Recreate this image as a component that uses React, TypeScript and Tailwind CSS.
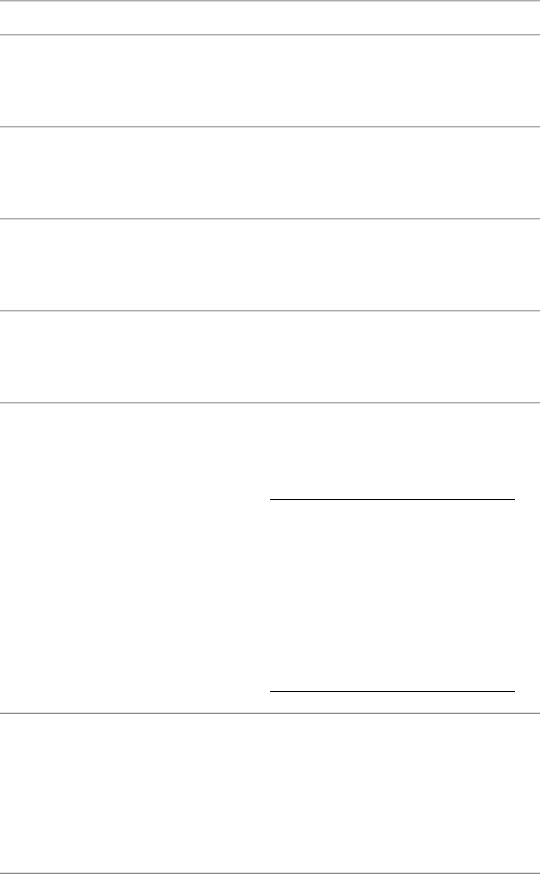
import React from 'react';

const Rule: React.FC = () => (
    <div className="h-[2px] w-full border-t border-t-[#a9a9a9] border-b border-b-[#dcdcdc]" />
);

const RuleDark: React.FC = () => (
    <div className="h-[2px] w-full border-t border-t-[#e0e0e0] border-b border-b-[#8a8a8a]" />
);

export default function App() {
    return (
        <div className="w-[540px] h-[875px] bg-white flex flex-col overflow-hidden">
            <Rule />
            <div className="h-[32px]" />
            <Rule />
            <div className="h-[90px]" />
            <Rule />
            <div className="h-[90px]" />
            <Rule />
            <div className="h-[90px]" />
            <Rule />
            <div className="h-[90px]" />
            <Rule />
            <div className="h-[308px] flex">
                <div className="w-[270px]" />
                <div className="w-[245px] flex flex-col">
                    <div className="h-[95px]" />
                    <div className="h-px bg-black" />
                    <div className="h-[191px]" />
                    <div className="h-px bg-black" />
                </div>
            </div>
            <RuleDark />
            <div className="h-[158px]" />
            <RuleDark />
        </div>
    );
}
